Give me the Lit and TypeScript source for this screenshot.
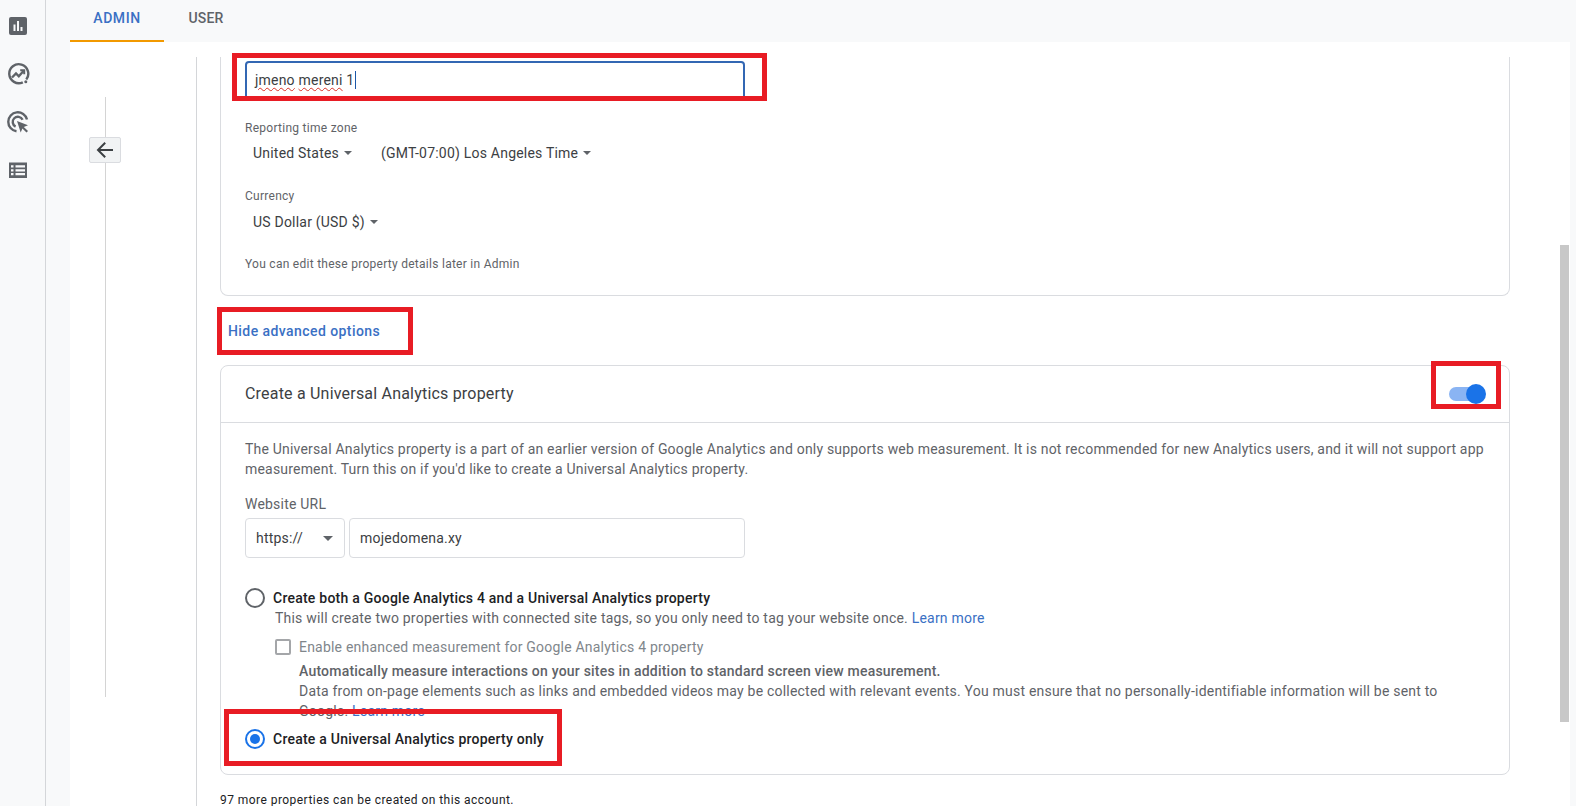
import { LitElement, html, css } from "lit";
import { customElement } from "lit/decorators.js";

const caret = html`<svg class="caret" width="8" height="4" viewBox="0 0 8 4"><path d="M0 0h8L4 4z" fill="#5f6368"/></svg>`;

@customElement("app-root")
export class AppRoot extends LitElement {
  static styles = css`
    :host { display: block; position: relative; width: 1576px; height: 806px; overflow: hidden; background: #f8f9fa;
      font-family: Roboto, "Liberation Sans", sans-serif; font-size: 14px; line-height: 20px; letter-spacing: .21px; color: #5f6368; }
    * { box-sizing: border-box; }
    .app { display: flex; height: 806px; }
    .rail { width: 46px; flex: none; border-right: 1px solid #d4d6d9; display: flex; flex-direction: column; align-items: flex-start; padding: 14px 0 0 6px; gap: 24px; }
    .rail svg { display: block; width: 24px; height: 24px; }
    .main { flex: 1; min-width: 0; padding: 0 6px 0 24px; display: flex; flex-direction: column; }
    .tabs { height: 42px; flex: none; display: flex; font-weight: 500; font-size: 14px; letter-spacing: .2px; }
    .tab { width: 84px; display: flex; align-items: center; justify-content: center; padding-bottom: 6px; color: #5f6368; }
    .tab.on { width: 94px; color: #3a70c4; border-bottom: 2px solid #f29900; padding-bottom: 4px; letter-spacing: .55px; }
    .panel { flex: 1; background: #fff; display: flex; padding-top: 15px; position: relative; min-height: 0; }
    .stepper { width: 126px; flex: none; position: relative; padding: 40px 0 0 35px; }
    .stepline { width: 1px; height: 600px; background: #d4d4d4; }
    .back { position: absolute; left: 19px; top: 80px; width: 32px; height: 26px; background: #f1f3f4; border: 1px solid #dadce0; border-radius: 2px; display: flex; align-items: center; justify-content: center; }
    .content { border-left: 1px solid #d4d6d9; padding-left: 23px; width: 1314px; flex: none; }
    .card { border: 1px solid #dadce0; border-radius: 8px; background: #fff; }
    .card1 { border-top: 0; border-top-left-radius: 0; border-top-right-radius: 0; padding: 4px 24px 23px; }
    .input { height: 39px; width: 500px; border: 2px solid #3367b3; border-radius: 4px; padding: 6px 8px 8px; color: #3c4043; display: flex; align-items: center; }
    .sp { text-decoration: underline wavy #d93025 1px; text-underline-offset: 2px; }
    .cursor { display: inline-block; width: 1px; height: 18px; background: #1a57a8; margin-left: 1px; }
    .lab { font-size: 12px; line-height: 16px; letter-spacing: .27px; }
    .lab.tz { margin-top: 20px; }
    .lab.cur { margin-top: 25px; }
    .lab.note { margin-top: 24px; }
    .selrow { display: flex; padding-left: 8px; color: #3c4043; margin-top: 7px; }
    .selrow.two { margin-top: 8px; }
    .sel { display: flex; align-items: center; gap: 5px; }
    .sel.tzv { margin-left: 29px; }
    .caret { display: block; }
    .hide { margin: 25px 0 24px 8px; color: #3a70c4; font-weight: 500; letter-spacing: .43px; }
    .head { height: 57px; border-bottom: 1px solid #dadce0; display: flex; align-items: center; justify-content: space-between; padding: 0 23px 0 24px; }
    .title { font-size: 16px; letter-spacing: .2px; color: #3c4043; }
    .toggle { width: 38px; height: 20px; position: relative; display: flex; align-items: center; }
    .track { width: 29px; height: 14px; margin-left: 1px; border-radius: 7px; background: #8ab4f3; }
    .thumb { position: absolute; right: 0; top: 0; width: 20px; height: 20px; border-radius: 50%; background: #1a73e8; }
    .body { padding: 16px 24px 25px; }
    .desc { letter-spacing: .19px; }
    .url { margin-top: 15px; }
    .ctrls { display: flex; gap: 4px; margin-top: 4px; }
    .box { height: 40px; border: 1px solid #dadce0; border-radius: 4px; display: flex; align-items: center; color: #3c4043; }
    .box.proto { width: 100px; padding: 0 11px 0 10px; justify-content: space-between; }
    .box.dom { width: 396px; padding: 0 10px; }
    .radio-row { display: flex; align-items: center; gap: 8px; color: #202124; font-weight: 500; letter-spacing: .24px; }
    .radio-row.first { margin-top: 30px; }
    .radio-row.second { margin-top: 8px; }
    .radio { width: 20px; height: 20px; flex: none; border-radius: 50%; border: 2px solid #5f6368; display: flex; align-items: center; justify-content: center; }
    .radio.on { border-color: #1a73e8; }
    .radio.on::after { content: ""; width: 10px; height: 10px; border-radius: 50%; background: #1a73e8; }
    .sub { padding-left: 30px; }
    .link { color: #3a70c4; }
    .chk-row { display: flex; align-items: center; gap: 8px; margin: 9px 0 4px 30px; color: #80868b; }
    .chk { width: 16px; height: 16px; border: 2px solid #a4a6a9; border-radius: 2px; flex: none; }
    .ext { padding: 0 20px 0 54px; }
    .ext b { font-weight: 500; display: block; }
    .more { margin-top: 17px; font-size: 12px; line-height: 16px; letter-spacing: .45px; color: #202124; }
    .scroll { position: absolute; left: 1490px; top: 203px; width: 9px; height: 477px; background: #c8c8c8; }
    .mark { position: absolute; border: 5px solid #e81c24; pointer-events: none; }
    .m1 { left: 232px; top: 53px; width: 535px; height: 48px; }
    .m2 { left: 217px; top: 307px; width: 196px; height: 48px; }
    .m3 { left: 1431px; top: 361px; width: 70px; height: 48px; }
    .m4 { left: 224px; top: 709px; width: 338px; height: 57px; }
  `;

  render() {
    return html`
      <div class="app">
        <nav class="rail">
          <svg viewBox="0 0 24 24"><rect x="3" y="3" width="18" height="18" rx="2" fill="#5f6368"/><path d="M7.500 10.500h2V17h-2zM11 7h2v10h-2zM14.500 13h2v4h-2z" fill="#f8f9fa"/></svg>
          <svg viewBox="0 0 24 24" fill="none" stroke="#5f6368" stroke-width="2.400"><path d="M20.300 17.500A9.500 9.500 0 1 0 16.800 20.300"/><path d="M6 15.500l4-4 2.800 2.800 4.700-5.300"/><path d="M14.200 8.200h4v4" stroke-width="2"/><circle cx="19.800" cy="19.800" r="1.500" fill="#5f6368" stroke="none"/></svg>
          <svg viewBox="0 0 24 24" fill="none" stroke="#5f6368" stroke-width="2.400"><path d="M21 9.500A9.500 9.500 0 1 0 10.500 21.200"/><path d="M16.600 9.700A5.200 5.200 0 1 0 9.600 16.600"/><path d="M11 11l11 4.200-4.200 1.800 4.200 4-1.500 1.500-4.100-4-1.700 4z" fill="#5f6368" stroke="none"/></svg>
          <svg viewBox="0 0 24 24"><path fill-rule="evenodd" d="M3 4.500h18V20H3zM5 7.300v2.200h2.500V7.300zM9.500 7.300v2.200H19V7.300zM5 11.200v2.200h2.500v-2.200zM9.500 11.200v2.200H19v-2.200zM5 15.100v2.200h2.500v-2.200zM9.500 15.100v2.200H19v-2.200z" fill="#5f6368"/></svg>
        </nav>
        <div class="main">
          <div class="tabs"><div class="tab on">ADMIN</div><div class="tab">USER</div></div>
          <div class="panel">
            <div class="stepper">
              <div class="stepline"></div>
              <div class="back"><svg width="20" height="20" viewBox="0 0 20 20" fill="none" stroke="#3c4043" stroke-width="2"><path d="M18 10H3M10.200 2.800L3 10l7.200 7.200"/></svg></div>
            </div>
            <div class="content">
              <section class="card card1">
                <div class="input"><span><span class="sp">jmeno</span> <span class="sp">mereni</span> 1</span><span class="cursor"></span></div>
                <div class="lab tz">Reporting time zone</div>
                <div class="selrow">
                  <div class="sel">United States ${caret}</div>
                  <div class="sel tzv">(GMT-07:00) Los Angeles Time ${caret}</div>
                </div>
                <div class="lab cur">Currency</div>
                <div class="selrow two"><div class="sel">US Dollar (USD $) ${caret}</div></div>
                <div class="lab note">You can edit these property details later in Admin</div>
              </section>
              <div class="hide">Hide advanced options</div>
              <section class="card">
                <div class="head">
                  <div class="title">Create a Universal Analytics property</div>
                  <div class="toggle"><div class="track"></div><div class="thumb"></div></div>
                </div>
                <div class="body">
                  <div class="desc">The Universal Analytics property is a part of an earlier version of Google Analytics and only supports web measurement. It is not recommended for new Analytics users, and it will not support app measurement. Turn this on if you'd like to create a Universal Analytics property.</div>
                  <div class="url">Website URL</div>
                  <div class="ctrls">
                    <div class="box proto">https:// <svg class="caret" width="10" height="5" viewBox="0 0 10 5"><path d="M0 0h10L5 5z" fill="#5f6368"/></svg></div>
                    <div class="box dom">mojedomena.xy</div>
                  </div>
                  <div class="radio-row first"><span class="radio"></span>Create both a Google Analytics 4 and a Universal Analytics property</div>
                  <div class="sub">This will create two properties with connected site tags, so you only need to tag your website once. <span class="link">Learn more</span></div>
                  <div class="chk-row"><span class="chk"></span>Enable enhanced measurement for Google Analytics 4 property</div>
                  <div class="ext">
                    <b>Automatically measure interactions on your sites in addition to standard screen view measurement.</b>
                    Data from on-page elements such as links and embedded videos may be collected with relevant events. You must ensure that no personally-identifiable information will be sent to Google. <span class="link">Learn more</span>
                  </div>
                  <div class="radio-row second"><span class="radio on"></span>Create a Universal Analytics property only</div>
                </div>
              </section>
              <div class="more">97 more properties can be created on this account.</div>
            </div>
            <div class="scroll"></div>
          </div>
        </div>
      </div>
      <div class="mark m1"></div>
      <div class="mark m2"></div>
      <div class="mark m3"></div>
      <div class="mark m4"></div>
    `;
  }
}
